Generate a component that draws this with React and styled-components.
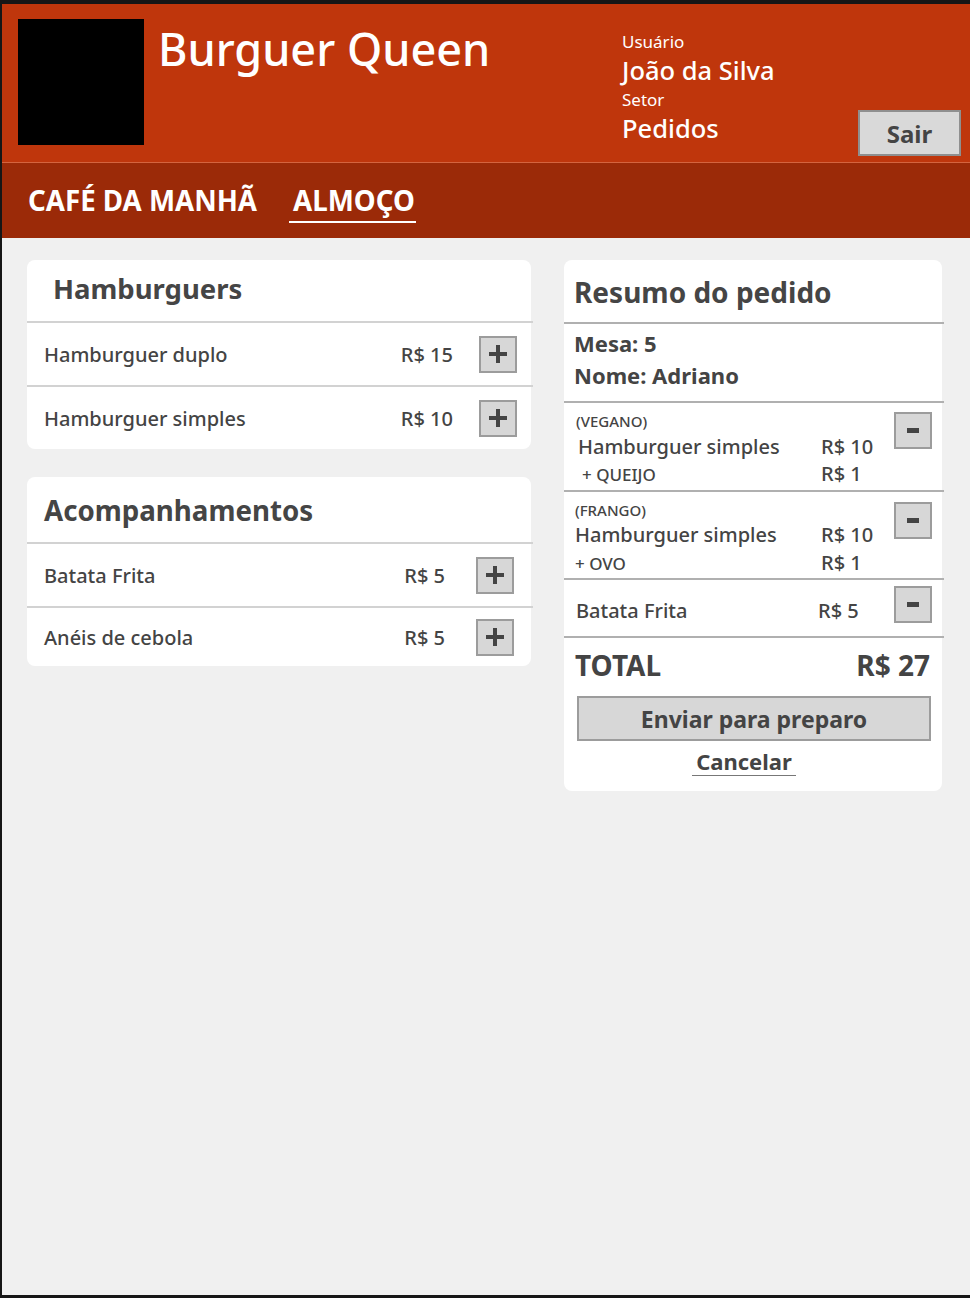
import React from "react";
import styled, { createGlobalStyle } from "styled-components";

const Global = createGlobalStyle`
  html, body { margin: 0; padding: 0; background: #161616; }
  body { font-family: "Noto Sans", "Open Sans", sans-serif; color: #444; }
  * { box-sizing: border-box; }
`;

const Frame = styled.div`
  height: 1298px;
  border-top: 4px solid #161616;
  border-left: 2px solid #161616;
  border-bottom: 3px solid #161616;
  background: #f0f0f0;
  display: flex;
  flex-direction: column;
`;

const Header = styled.header`
  height: 159px;
  background: #bf360c;
  border-bottom: 1px solid #d4643f;
  display: flex;
  align-items: flex-start;
  padding: 15px 9px 0 16px;
`;

const Logo = styled.div`
  width: 126px;
  height: 126px;
  background: #000;
  flex: none;
`;

const Brand = styled.h1`
  margin: 7px 0 0 14px;
  font-size: 45px;
  line-height: 1;
  font-weight: 500;
  color: #fff;
  white-space: nowrap;
`;

const UserBox = styled.div`
  margin-left: auto;
  width: 236px;
  padding-top: 11px;
  color: #fff;
  display: flex;
  flex-direction: column;
`;

const UserLabel = styled.span`
  font-size: 17px;
  line-height: 24px;
`;

const UserValue = styled.span`
  font-size: 25.5px;
  line-height: 32px;
  font-weight: 500;
  margin-bottom: ${(p) => p.$mb || 0}px;
`;

const SairButton = styled.button`
  align-self: flex-end;
  margin-bottom: 6px;
  width: 103px;
  height: 46px;
  background: #d9d9d9;
  border: 2px solid #8f8f8f;
  font-family: inherit;
  font-weight: 700;
  font-size: 24px;
  color: #444;
  padding: 0;
  cursor: pointer;
`;

const Nav = styled.nav`
  height: 75px;
  background: #9b2a08;
  display: flex;
  align-items: flex-start;
  gap: 31px;
  padding: 20px 0 0 22px;
`;

const Tab = styled.a`
  font-size: 27.7px;
  line-height: 34px;
  font-weight: 700;
  color: #fff;
  padding: 0 1px 4px 4px;
  border-bottom: 2px solid ${(p) => (p.$active ? "#fff" : "transparent")};
  white-space: nowrap;
`;

const Main = styled.main`
  display: flex;
  align-items: flex-start;
  gap: 33px;
  padding: 22px 0 0 25px;
`;

const Column = styled.div`
  width: ${(p) => p.$w}px;
  display: flex;
  flex-direction: column;
  gap: 28px;
`;

const Card = styled.section`
  background: #fff;
  border-radius: 8px;
  display: flex;
  flex-direction: column;
`;

const CardTitle = styled.h2`
  margin: 0;
  height: ${(p) => p.$h}px;
  padding: ${(p) => p.$pt}px 0 0 ${(p) => p.$pl}px;
  font-size: ${(p) => p.$fs}px;
  line-height: 34px;
  font-weight: 700;
  color: #454545;
`;

const Divider = styled.hr`
  margin: 0 ${(p) => -(p.$over || 0)}px 0 0;
  border: none;
  height: 2px;
  background: ${(p) => p.$c || "#d2d2d2"};
`;

const MenuRow = styled.div`
  height: ${(p) => p.$h}px;
  display: flex;
  align-items: center;
  padding: 0 ${(p) => p.$pr}px 0 17px;
  font-size: 20px;
  font-weight: 500;
`;

const ItemName = styled.span`
  flex: 1;
`;

const ItemPrice = styled.span`
  margin-right: ${(p) => p.$mr}px;
`;

const IconButton = styled.button`
  width: 38px;
  height: 37px;
  padding: 0;
  background: #d7d7d7;
  border: 2px solid #9c9c9c;
  display: flex;
  align-items: center;
  justify-content: center;
  flex: none;
  cursor: pointer;
  margin-top: ${(p) => p.$mt || 0}px;
`;

const Plus = () => (
  <svg width="20" height="20" viewBox="0 0 20 20">
    <rect x="8" y="1" width="4" height="18" fill="#444" />
    <rect x="1" y="8" width="18" height="4" fill="#444" />
  </svg>
);

const Minus = () => (
  <svg width="12" height="6" viewBox="0 0 12 6">
    <rect x="0" y="0" width="12" height="5" fill="#444" />
  </svg>
);

const InfoBlock = styled.div`
  height: 77px;
  padding: 3px 0 0 10px;
  font-size: 22px;
  font-weight: 700;
  line-height: 32px;
  display: flex;
  flex-direction: column;
`;

const OrderItem = styled.div`
  height: ${(p) => p.$h}px;
  display: flex;
  align-items: flex-start;
  padding: ${(p) => p.$pt}px 10px 0 0;
`;

const OrderLines = styled.div`
  width: 330px;
  display: flex;
  flex-direction: column;
`;

const OrderLine = styled.div`
  height: ${(p) => p.$h}px;
  display: flex;
  align-items: baseline;
  line-height: ${(p) => p.$h}px;
  font-weight: 500;
`;

const LineName = styled.span`
  width: ${(p) => p.$w || 257}px;
  padding-left: ${(p) => p.$pl}px;
  font-size: ${(p) => p.$fs}px;
  white-space: nowrap;
`;

const LinePrice = styled.span`
  font-size: 20px;
`;

const TotalRow = styled.div`
  display: flex;
  justify-content: space-between;
  padding: 10px 12px 0 11px;
  font-size: 28px;
  line-height: 34px;
  font-weight: 700;
`;

const SendButton = styled.button`
  margin: 14px 11px 0 13px;
  height: 45px;
  background: #d7d7d7;
  border: 2px solid #9c9c9c;
  font-family: inherit;
  font-size: 23px;
  font-weight: 700;
  color: #444;
  cursor: pointer;
`;

const CancelRow = styled.div`
  display: flex;
  justify-content: center;
  padding: 6px 18px 15px 0;
`;

const CancelLink = styled.a`
  font-size: 22px;
  font-weight: 700;
  line-height: 28px;
  padding: 0 4px;
  border-bottom: 1px solid #777;
  color: #444;
`;

export default function App() {
  return (
    <>
      <Global />
      <Frame>
        <Header>
          <Logo />
          <Brand>Burguer Queen</Brand>
          <UserBox>
            <UserLabel>Usuário</UserLabel>
            <UserValue $mb={2}>João da Silva</UserValue>
            <UserLabel>Setor</UserLabel>
            <UserValue>Pedidos</UserValue>
          </UserBox>
          <SairButton>Sair</SairButton>
        </Header>
        <Nav>
          <Tab>CAFÉ DA MANHÃ</Tab>
          <Tab $active>ALMOÇO</Tab>
        </Nav>
        <Main>
          <Column $w={504}>
            <Card>
              <CardTitle $h={61} $pt={12} $pl={26} $fs={27.5}>
                Hamburguers
              </CardTitle>
              <Divider $over={2} />
              <MenuRow $h={62} $pr={14}>
                <ItemName>Hamburguer duplo</ItemName>
                <ItemPrice $mr={26}>R$ 15</ItemPrice>
                <IconButton>
                  <Plus />
                </IconButton>
              </MenuRow>
              <Divider $over={2} />
              <MenuRow $h={62} $pr={14}>
                <ItemName>Hamburguer simples</ItemName>
                <ItemPrice $mr={26}>R$ 10</ItemPrice>
                <IconButton>
                  <Plus />
                </IconButton>
              </MenuRow>
            </Card>
            <Card>
              <CardTitle $h={65} $pt={16} $pl={17} $fs={27.7}>
                Acompanhamentos
              </CardTitle>
              <Divider $over={2} />
              <MenuRow $h={62} $pr={17}>
                <ItemName>Batata Frita</ItemName>
                <ItemPrice $mr={31}>R$ 5</ItemPrice>
                <IconButton>
                  <Plus />
                </IconButton>
              </MenuRow>
              <Divider $over={2} />
              <MenuRow $h={58} $pr={17}>
                <ItemName>Anéis de cebola</ItemName>
                <ItemPrice $mr={31}>R$ 5</ItemPrice>
                <IconButton>
                  <Plus />
                </IconButton>
              </MenuRow>
            </Card>
          </Column>
          <Column $w={378}>
            <Card>
              <CardTitle $h={62} $pt={15} $pl={10} $fs={28}>
                Resumo do pedido
              </CardTitle>
              <Divider $c="#b0b0b0" $over={2} />
              <InfoBlock>
                <span>Mesa: 5</span>
                <span>Nome: Adriano</span>
              </InfoBlock>
              <Divider $c="#b0b0b0" $over={2} />
              <OrderItem $h={87} $pt={6}>
                <OrderLines>
                  <OrderLine $h={24}>
                    <LineName $pl={12} $fs={15}>(VEGANO)</LineName>
                  </OrderLine>
                  <OrderLine $h={27}>
                    <LineName $pl={14} $fs={20}>Hamburguer simples</LineName>
                    <LinePrice>R$ 10</LinePrice>
                  </OrderLine>
                  <OrderLine $h={27}>
                    <LineName $pl={18} $fs={17}>+ QUEIJO</LineName>
                    <LinePrice>R$ 1</LinePrice>
                  </OrderLine>
                </OrderLines>
                <IconButton $mt={3}>
                  <Minus />
                </IconButton>
              </OrderItem>
              <Divider $c="#b0b0b0" $over={2} />
              <OrderItem $h={86} $pt={8}>
                <OrderLines>
                  <OrderLine $h={21}>
                    <LineName $pl={11} $fs={15}>(FRANGO)</LineName>
                  </OrderLine>
                  <OrderLine $h={28}>
                    <LineName $pl={11} $fs={20}>Hamburguer simples</LineName>
                    <LinePrice>R$ 10</LinePrice>
                  </OrderLine>
                  <OrderLine $h={28}>
                    <LineName $pl={11} $fs={17}>+ OVO</LineName>
                    <LinePrice>R$ 1</LinePrice>
                  </OrderLine>
                </OrderLines>
                <IconButton $mt={2}>
                  <Minus />
                </IconButton>
              </OrderItem>
              <Divider $c="#b0b0b0" $over={2} />
              <OrderItem $h={56} $pt={17}>
                <OrderLines>
                  <OrderLine $h={27}>
                    <LineName $pl={12} $fs={20} $w={254}>Batata Frita</LineName>
                    <LinePrice>R$ 5</LinePrice>
                  </OrderLine>
                </OrderLines>
                <IconButton $mt={-11}>
                  <Minus />
                </IconButton>
              </OrderItem>
              <Divider $c="#b0b0b0" $over={2} />
              <TotalRow>
                <span>TOTAL</span>
                <span>R$ 27</span>
              </TotalRow>
              <SendButton>Enviar para preparo</SendButton>
              <CancelRow>
                <CancelLink>Cancelar</CancelLink>
              </CancelRow>
            </Card>
          </Column>
        </Main>
      </Frame>
    </>
  );
}
